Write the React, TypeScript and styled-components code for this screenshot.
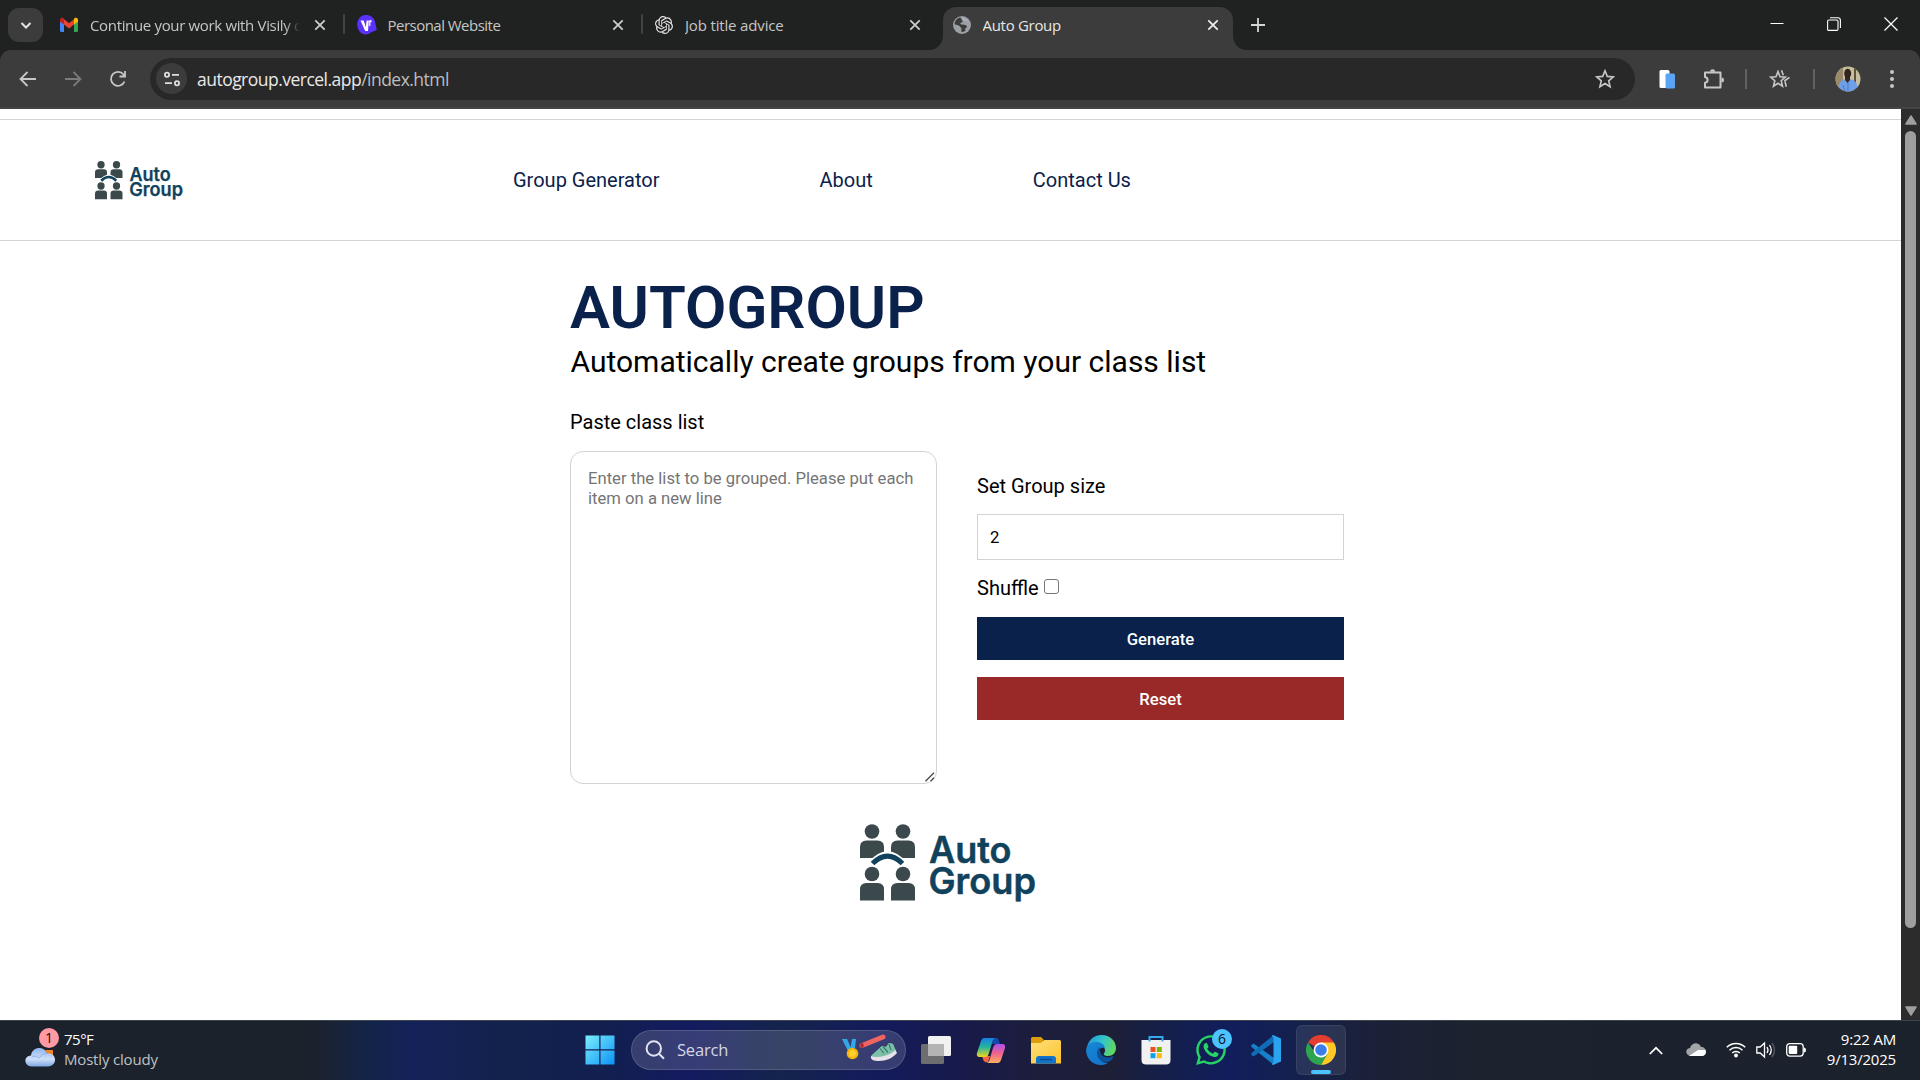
import React from "react";
import styled, { createGlobalStyle } from "styled-components";
import { SiOpenai } from "react-icons/si";
import { FaWhatsapp } from "react-icons/fa";

const GlobalStyle = createGlobalStyle`
  *, *::before, *::after { box-sizing: border-box; }
  body { margin: 0; background: #fff; overflow: hidden; }
`;

const systemFont = `"Open Sans", "Noto Sans", sans-serif`;

const Screen = styled.div`
  width: 1920px;
  height: 1080px;
  display: flex;
  flex-direction: column;
  overflow: hidden;
  font-family: ${systemFont};
  svg { display: block; flex: none; }
`;

/* ---------- browser tab strip ---------- */

const TabStrip = styled.div`
  height: 50px;
  flex: none;
  display: flex;
  background: #202221;
  padding-left: 8px;
`;

const TabSearch = styled.div`
  width: 35px;
  height: 34px;
  margin: 8px 7px 0 0;
  border-radius: 11px;
  background: #3b3c3b;
  display: grid;
  place-items: center;
`;

const TabSlot = styled.div`
  width: 297.5px;
  padding-top: 7px;
  display: flex;
`;

const Tab = styled.div<{ $active?: boolean }>`
  position: relative;
  width: 290px;
  height: 43px;
  display: flex;
  align-items: center;
  padding: 0 10px 7px 9px;
  border-radius: 13px 13px 0 0;
  background: ${(p) => (p.$active ? "#3c3c3c" : "transparent")};
  color: ${(p) => (p.$active ? "#e6e6e6" : "#c5c6c5")};
  ${(p) =>
    p.$active &&
    `
    &::before, &::after {
      content: "";
      position: absolute;
      bottom: 0;
      width: 14px;
      height: 14px;
    }
    &::before { left: -14px; background: radial-gradient(circle at 0 0, #202221 13.5px, #3c3c3c 14.5px); }
    &::after { right: -14px; background: radial-gradient(circle at 100% 0, #202221 13.5px, #3c3c3c 14.5px); }
  `}
`;

const TabTitle = styled.span<{ $spacing?: number; $fade?: boolean }>`
  width: 210px;
  margin-left: 11px;
  font-size: 15px;
  line-height: 22px;
  letter-spacing: ${(p) => p.$spacing ?? -0.3}px;
  white-space: nowrap;
  overflow: hidden;
  ${(p) => p.$fade && `mask-image: linear-gradient(90deg, #000 195px, transparent 210px);`}
`;

const TabDivider = styled.div`
  width: 2px;
  height: 20px;
  margin: 7px 0 0 3px;
  border-radius: 1px;
  background: #414241;
`;

const TabClose = styled.div`
  width: 20px;
  margin-left: auto;
  display: grid;
  place-items: center;
`;

const NewTab = styled.div`
  width: 36px;
  height: 50px;
  display: grid;
  place-items: center;
`;

const WindowControls = styled.div`
  display: flex;
  margin: 0 1px 0 auto;
`;

const WindowButton = styled.div`
  width: 57px;
  height: 48px;
  display: grid;
  place-items: center;
`;

/* ---------- browser toolbar ---------- */

const ToolbarBack = styled.div`
  flex: none;
  background: #202221;
`;

const Toolbar = styled.div`
  height: 59px;
  display: flex;
  align-items: center;
  background: #3c3c3c;
  border-radius: 11px 11px 0 0;
  border-bottom: 2px solid #454545;
  padding-left: 6px;
`;

const ToolButton = styled.div<{ $width: number }>`
  width: ${(p) => p.$width}px;
  height: 42px;
  flex: none;
  display: grid;
  place-items: center;
`;

const AddressBar = styled.div`
  width: 1485px;
  height: 42px;
  flex: none;
  margin-left: 9px;
  border-radius: 21px;
  background: #282828;
  display: flex;
  align-items: center;
  padding: 0 20px 0 6px;
`;

const SiteChip = styled.div`
  width: 31px;
  height: 31px;
  border-radius: 50%;
  background: #3c3c3c;
  display: grid;
  place-items: center;
`;

const Url = styled.span`
  flex: 1;
  margin-left: 10px;
  font-size: 17.5px;
  line-height: 24px;
  letter-spacing: -0.52px;
  color: #e8e8e8;
  span { color: #bdbdbd; }
`;

const ToolDivider = styled.div`
  width: 2px;
  height: 20px;
  background: #616161;
`;

/* ---------- web page ---------- */

const Viewport = styled.div`
  height: 911px;
  flex: none;
  display: flex;
`;

const Page = styled.div`
  width: 1901px;
  height: 911px;
  background: #fff;
  padding-top: 10px;
  font-family: Roboto, sans-serif;
  color: #000;
`;

const Nav = styled.nav`
  height: 122px;
  border-top: 1px solid #d3d3d3;
  border-bottom: 1px solid #d3d3d3;
  display: flex;
  align-items: center;
  padding-left: 94.5px;
`;

const NavLinks = styled.div`
  display: flex;
  gap: 160px;
  margin-left: 330.5px;
`;

const NavLink = styled.a`
  font-size: 20px;
  line-height: 24px;
  color: #0a214c;
  white-space: nowrap;
`;

const Content = styled.main`
  width: 774px;
  margin-left: 570px;
  padding-top: 32px;
`;

const Title = styled.h1`
  margin: 0;
  font-size: 60px;
  line-height: 70px;
  font-weight: 600;
  color: #0a214c;
`;

const Subtitle = styled.p`
  margin: 1px 0 0 0.5px;
  font-size: 30px;
  line-height: 35px;
  white-space: nowrap;
`;

const FormRow = styled.div`
  display: flex;
  gap: 40px;
  margin-top: 31px;
`;

const Column = styled.div<{ $offset?: number }>`
  width: 367px;
  display: flex;
  flex-direction: column;
  padding-top: ${(p) => p.$offset ?? 0}px;
`;

const Label = styled.label`
  font-size: 20px;
  line-height: 24px;
`;

const ListField = styled.div`
  position: relative;
  margin-top: 17px;
`;

const ListInput = styled.textarea`
  display: block;
  width: 367px;
  height: 333px;
  padding: 16.5px 16px 16.5px 17px;
  border: 1px solid #d3d3d3;
  border-radius: 13px;
  outline: none;
  font-family: Roboto, sans-serif;
  font-size: 16.667px;
  line-height: 20px;
  resize: none;
  &::placeholder { color: #757575; }
`;

const ResizeGrip = styled.svg`
  position: absolute;
  right: 2px;
  bottom: 2px;
`;

const SizeInput = styled.input`
  width: 367px;
  height: 46px;
  margin-top: 16px;
  padding: 0 12px;
  border: 1px solid #d3d3d3;
  outline: none;
  font-family: Roboto, sans-serif;
  font-size: 16.667px;
`;

const ShuffleRow = styled.label`
  display: flex;
  height: 24px;
  margin: 16px 0 17px;
  font-size: 20px;
  line-height: 24px;
`;

const ShuffleBox = styled.input`
  appearance: none;
  width: 15px;
  height: 15px;
  margin: 3px 0 0 5px;
  border: 1px solid #767676;
  border-radius: 3px;
  background: #fff;
`;

const ActionButton = styled.button<{ $color: string }>`
  height: 43px;
  margin-bottom: 17px;
  padding: 2px 0 0;
  border: 0;
  background: ${(p) => p.$color};
  color: #fff;
  font-family: Roboto, sans-serif;
  font-size: 16.667px;
  font-weight: 500;
  line-height: 20px;
`;

const FooterLogo = styled.div`
  margin: 39.5px 0 0 290px;
`;

const Scrollbar = styled.div`
  width: 19px;
  height: 911px;
  background: #2c2c2c;
  display: flex;
  flex-direction: column;
  align-items: center;
  padding-top: 6px;
`;

const Thumb = styled.div`
  width: 11px;
  height: 797px;
  margin: 6px 0 78px;
  border-radius: 6px;
  background: #9f9f9f;
`;

/* ---------- taskbar ---------- */

const Taskbar = styled.div`
  height: 60px;
  flex: none;
  display: flex;
  align-items: center;
  padding-bottom: 1px;
  border-top: 1px solid #3b454e;
  color: #fff;
  background: linear-gradient(
    90deg,
    #1c222c 0, #1c222c 315px, #13244a 370px, #14225a 415px, #13224c 500px,
    #121f50 610px, #141b60 690px, #14244c 780px, #141b5c 880px, #171a4a 960px,
    #1d1e3c 1040px, #1d1f36 1110px, #141f4c 1170px, #111e5c 1230px, #14214c 1300px,
    #1c2038 1370px, #1c222e 1480px, #1c222c 1920px
  );
`;

const Weather = styled.div`
  width: 560px;
  display: flex;
  align-items: center;
  padding-left: 25px;
`;

const WeatherText = styled.div`
  margin-left: 7px;
  padding-bottom: 3px;
  font-size: 15px;
  line-height: 20px;
  letter-spacing: -0.18px;
  color: #bfc1c4;
  strong { display: block; font-weight: 400; color: #fff; letter-spacing: -0.5px; }
`;

const TaskIcon = styled.div<{ $active?: boolean }>`
  position: relative;
  width: 50px;
  height: 50px;
  margin-right: 5px;
  display: grid;
  place-items: center;
  border-radius: 6px;
  background: ${(p) => (p.$active ? "rgba(255,255,255,.085)" : "transparent")};
  box-shadow: ${(p) => (p.$active ? "inset 0 0 0 1px rgba(255,255,255,.07)" : "none")};
`;

const StartButton = styled(TaskIcon)`
  margin: 0 -6px 0 15px;
`;

const RunningMark = styled.div`
  position: absolute;
  left: 15px;
  bottom: 1px;
  width: 20px;
  height: 4px;
  border-radius: 2px;
  background: #4cc2ff;
`;

const CountBadge = styled.div<{ $color: string; $x: number; $y: number }>`
  position: absolute;
  left: ${(p) => p.$x}px;
  top: ${(p) => p.$y}px;
  width: 20px;
  height: 20px;
  border-radius: 50%;
  background: ${(p) => p.$color};
  color: #111;
  font-size: 14px;
  line-height: 20px;
  text-align: center;
`;

const WeatherIcon = styled.div`
  width: 32px;
  height: 40px;
  padding-top: 17px;
  position: relative;
`;

const SearchBox = styled.div`
  width: 275px;
  height: 40px;
  margin: 0 5px 0 12px;
  border-radius: 20px;
  border: 1px solid rgba(255, 255, 255, 0.14);
  background: rgba(255, 255, 255, 0.15);
  display: flex;
  align-items: center;
  padding: 0 7px 0 13px;
`;

const SearchText = styled.span`
  flex: 1;
  margin-left: 12px;
  font-size: 16.5px;
  line-height: 24px;
  letter-spacing: -0.2px;
  color: #d5d7e4;
`;

const Tray = styled.div`
  margin-left: auto;
  display: flex;
  align-items: center;
  padding-right: 24px;
`;

const TrayItem = styled.div<{ $width: number }>`
  width: ${(p) => p.$width}px;
  display: grid;
  place-items: center;
`;

const Clock = styled.div`
  width: 80px;
  padding-bottom: 3px;
  text-align: right;
  font-size: 15px;
  line-height: 20px;
  letter-spacing: -0.2px;
  white-space: nowrap;
`;

/* ---------- drawings ---------- */

const Person = ({ x, y }: { x: number; y: number }) => (
  <g transform={`translate(${x} ${y})`} fill="#3b494c">
    <circle cx="12" cy="7.5" r="7.3" />
    <path d="M0 34V23q0-6.500 6.500-6.500h11q6.500 0 6.500 6.500v11z" />
  </g>
);

const AutoGroupLogo = ({ scale }: { scale: number }) => (
  <svg width={176 * scale} height={78 * scale} viewBox="0 0 176 78" overflow="visible">
    <Person x={0} y={0} />
    <Person x={31} y={0} />
    <path d="M11.500 42Q27.500 22 43.500 42" fill="none" stroke="#fff" strokeWidth="9.500" />
    <Person x={0} y={42.500} />
    <Person x={31} y={42.500} />
    <path d="M12.500 39.500Q27.500 24.500 42.500 39.500" fill="none" stroke="#10425c" strokeWidth="5" />
    <g fill="#10425c" stroke="#10425c" strokeWidth=".5" fontFamily="Inter, sans-serif" fontSize="37" fontWeight="600">
      <text x="69" y="39.300" textLength="82.500" lengthAdjust="spacingAndGlyphs">Auto</text>
      <text x="68.500" y="70" textLength="107.500" lengthAdjust="spacingAndGlyphs">Group</text>
    </g>
  </svg>
);

const Cross = ({ color = "#d0d0d0" }: { color?: string }) => (
  <svg width="12" height="12" viewBox="0 0 12 12" stroke={color} strokeWidth="1.800">
    <path d="M1.300 1.300l9.400 9.400M10.700 1.300l-9.400 9.400" />
  </svg>
);

const GmailIcon = () => (
  <svg width="20" height="20" viewBox="0 0 20 20">
    <path d="M1 5v10.500Q1 17 2.500 17H5V8.300z" fill="#4285f4" />
    <path d="M19 5v10.500q0 1.500-1.500 1.500H15V8.300z" fill="#34a853" />
    <path d="M5 4.300l5 4 5-4v5.300l-5 3.900-5-3.900z" fill="#ea4335" />
    <path d="M1 6V5c0-2 2.200-2.800 3.500-1.700L5 3.700v5.900L1 6.700z" fill="#c5221f" />
    <path d="M19 6V5c0-2-2.200-2.800-3.500-1.700l-.5.400v5.900l4-2.900z" fill="#fbbc04" />
  </svg>
);

const VisilyIcon = () => (
  <svg width="20" height="20" viewBox="0 0 20 20">
    <path d="M8.500 0c4.500-.5 8 2 9.300 6l2 8.600c-1.300 1.600-4 2-6 3C10 20.500 5.500 20 2.500 16.500-.5 12.300-.5 7 2.300 3 4 1 6 .2 8.500 0z" fill="#5b32fb" />
    <path d="M3.500 5.500h3.200l2.200 6.700L9.600 5.500h2.200L11 16H8.200z" fill="#fff" />
    <path d="M12.200 5.200h2.300v2h-1.100v3.600l-1.200.4z" fill="#fff" />
  </svg>
);

const GlobeIcon = () => (
  <svg width="20" height="20" viewBox="0 0 20 20">
    <circle cx="10" cy="10" r="9" fill="#9aa0a6" />
    <path d="M8.500 2.600C5 3.200 2.700 6 2.600 9.200l4.200 1.300c1.300.2 1.200 2.200 2.600 2.300v3.900c1.500.5 3.200-.1 4-1.300l-.2-2 1.900-1.500c-.5-1.600-1.800-2.300-3.400-2.100L9.200 9.600 8.100 8.300l2.700-1.600z" fill="#3c3c3c" />
    <path d="M11.200 2.500l1.100 2.300 3.200.3" fill="none" stroke="#b8bdc2" strokeWidth="1.200" />
  </svg>
);

const starPath = "M10 1.800l2.300 5.600 6 .5-4.600 3.900 1.400 5.900-5.100-3.200-5.100 3.200 1.400-5.900L1.700 7.900l6-.5z";

const Line = ({ d, size = 20, color = "#c7c7c7", w = 1.8 }: { d: string; size?: number; color?: string; w?: number }) => (
  <svg width={size} height={size} viewBox="0 0 20 20" fill="none" stroke={color} strokeWidth={w}>
    <path d={d} />
  </svg>
);

const SiteInfoIcon = () => (
  <svg width="18" height="18" viewBox="0 0 18 18" fill="none" stroke="#dedede" strokeWidth="1.800">
    <circle cx="4" cy="4.800" r="2.100" />
    <path d="M9 4.800h7M2 13.200h7" />
    <circle cx="14" cy="13.200" r="2.100" />
  </svg>
);

const Avatar = () => (
  <svg width="26" height="26" viewBox="0 0 26 26">
    <clipPath id="avatarClip"><circle cx="13" cy="13" r="12.500" /></clipPath>
    <g clipPath="url(#avatarClip)">
      <rect width="26" height="26" fill="#c7bd9e" />
      <path d="M0 0h8v26H0z" fill="#998a6b" />
      <path d="M19 0h2v26h-2z" fill="#5f5038" />
      <path d="M3 26c0-9 3-13 10-13s10 4 10 13z" fill="#6f9fe8" />
      <path d="M10 10h5v4l-2.500 3L10 14z" fill="#3a2720" />
      <ellipse cx="12.700" cy="7.500" rx="3.500" ry="4.700" fill="#32231e" />
      <path d="M13 17v9M8 19l2 7" stroke="#4770b4" strokeWidth=".8" />
    </g>
  </svg>
);

const CloudIcon = () => (
  <svg width="32" height="22" viewBox="0 0 32 22">
    <defs>
      <linearGradient id="cloud" x2="0" y2="1">
        <stop stopColor="#8eb5f2" /><stop offset=".6" stopColor="#cfdff8" /><stop offset="1" stopColor="#7fa6e4" />
      </linearGradient>
    </defs>
    <path d="M20 3h8v5h-5z" fill="#f5811f" />
    <path d="M6.500 19.500C-1.500 19-1.500 8.600 6 8.500 7-.500 19-1.500 22 6.300c10-1.300 11 12.900 1 13.200z" fill="url(#cloud)" />
    <path d="M7 9.500q4-1.500 7 1.500 3-5 8-4.500" fill="none" stroke="#7ea5e2" opacity=".7" />
  </svg>
);

const WindowsIcon = () => (
  <svg width="30" height="30" viewBox="0 0 30 30">
    <defs><linearGradient id="win" x2="1" y2="1"><stop stopColor="#7ceefc" /><stop offset="1" stopColor="#0c93f6" /></linearGradient></defs>
    <path d="M.500.500h13.800v13.800H.500zM15.500.500h14v13.800h-14zM.500 15.500h13.800v14H.500zM15.500 15.500h14v14h-14z" fill="url(#win)" />
  </svg>
);

const SearchArt = () => (
  <svg width="58" height="32" viewBox="0 0 58 32">
    <path d="M2 5h5l4 9-3 3zM12 5h4l-1 9-5 3z" fill="#31a9e8" />
    <circle cx="12.500" cy="19.500" r="5.800" fill="#f6b60b" />
    <circle cx="12.500" cy="19.500" r="3.500" fill="#ffcf2b" />
    <path d="M22 11.500L43 3" stroke="#ef6461" strokeWidth="5" strokeLinecap="round" />
    <ellipse cx="22" cy="11.500" rx="1.700" ry="2.400" fill="#9e2d36" />
    <path d="M31 22l11-10 4 1 3-4 4 1 3 8c-2 4-10 9-17 8z" fill="#7cc0aa" />
    <path d="M31 22c5 2 16 1 24-7l2 4c-4 5-11 8-18 8-5 0-9-1-8-5z" fill="#e7e1ea" />
    <path d="M31.500 21.500L42 12l4 1 3-4 4 1 2.500 6c-6 6-17 8-24 5.500z" fill="#7cc0aa" />
    <path d="M40 14.500l4 5M43 12.500l5 6M49 10l2 6" stroke="#38786b" strokeWidth="1.200" />
  </svg>
);

const TaskViewIcon = () => (
  <svg width="30" height="30" viewBox="0 0 30 30">
    <rect x="0" y="9" width="23" height="20" rx="1.500" fill="#6d6e70" />
    <rect x="7" y="1" width="23" height="20" rx="1.500" fill="#f1f1f1" />
    <path d="M7 9h16v12H8.500Q7 21 7 19.500z" fill="#b4b4b5" />
  </svg>
);

const CopilotIcon = () => (
  <svg width="30" height="30" viewBox="0 0 30 30">
    <defs>
      <linearGradient id="cpA" x2="0" y2="1"><stop stopColor="#167fe6" /><stop offset=".5" stopColor="#29b79a" /><stop offset="1" stopColor="#f4d51c" /></linearGradient>
      <linearGradient id="cpB" x2="0" y2="1"><stop stopColor="#a951ed" /><stop offset=".5" stopColor="#f0638d" /><stop offset="1" stopColor="#ffae5d" /></linearGradient>
    </defs>
    <path d="M17 3h3c2 0 2.500 1.500 3 3l1 3h-8z" fill="#1449b0" />
    <path d="M6 21h8l-2 6c-4 1-4.500-1-6-6z" fill="#f26545" />
    <path d="M8.500 3H19c-2 1-2.500 3-3 5l-3 10c-1 3-2 4-4 4H4c-3 0-3.500-2-3-4l4-12c.7-2 1.500-3 3.500-3z" fill="url(#cpA)" />
    <path d="M21.500 28H11c2-1 2.500-3 3-5l3-10c1-3 2-4 4-4h5c3 0 3.500 2 3 4l-4 12c-.7 2-1.500 3-3.500 3z" fill="url(#cpB)" />
  </svg>
);

const FolderIcon = () => (
  <svg width="30" height="30" viewBox="0 0 30 30">
    <defs><linearGradient id="fold" x2="1" y2="1"><stop stopColor="#ffe07a" /><stop offset="1" stopColor="#fcc22d" /></linearGradient></defs>
    <path d="M0 3.500Q0 2 1.500 2H10l3 3h-1v4H0z" fill="#dd9d0c" />
    <path d="M0 8h10l3-3h15.500Q30 5 30 6.500V28.500H0z" fill="url(#fold)" />
    <path d="M5 28.500V24q0-3 3-3h14q3 0 3 3v4.500z" fill="#1173ca" />
    <path d="M9 24.500h12" stroke="#0b4c8c" strokeWidth="1.500" />
  </svg>
);

const EdgeIcon = () => (
  <svg width="30" height="30" viewBox="0 0 30 30">
    <defs>
      <linearGradient id="edA" y1=".3" y2=".6"><stop stopColor="#2499dc" /><stop offset=".5" stopColor="#34c5c9" /><stop offset="1" stopColor="#64d957" /></linearGradient>
      <linearGradient id="edB" x2=".7" y2="1"><stop stopColor="#1687d6" /><stop offset="1" stopColor="#1474ca" /></linearGradient>
    </defs>
    <path d="M1 12C3 4 8.500 0 15.500 0 24 0 30 6 30 13c0 5-3.500 8-8 8-3 0-5-1-4-2.500 3-4-.500-8.500-6-8.500C7 10 3 11 1 16z" fill="url(#edA)" />
    <path d="M.200 14C1 9.500 5.500 7 10 7c5 0 8.500 2.500 8.800 6-4-1.500-8 2-7 7 1 5 6 8 10 8-2 1.400-4.500 2-7 2C6 30-.700 22.500.200 14z" fill="url(#edB)" />
    <path d="M14 12c-5 3-4 14 6 15 3 .300 5-1 7-4 1-1.500 0-2-1-1.500-7 3-13-1-12-9.500z" fill="#0c529c" />
  </svg>
);

const StoreIcon = () => (
  <svg width="30" height="30" viewBox="0 0 30 30">
    <path d="M.500 5h29v20q0 4.500-4.500 4.500H5Q.500 29.500.500 25z" fill="#f1f1f1" />
    <path d="M8.500 6.500V2h13v4.500" fill="none" stroke="#35aaea" strokeWidth="2" />
    <path d="M9.500 12h5v5h-5z" fill="#f04f23" /><path d="M15.800 12h5v5h-5z" fill="#7cb602" />
    <path d="M9.500 18.200h5v5h-5z" fill="#08a3ec" /><path d="M15.800 18.200h5v5h-5z" fill="#fdb90c" />
  </svg>
);

const CodeIcon = () => (
  <svg width="30" height="30" viewBox="0 0 30 30">
    <path d="M0 10.500L2.500 8.500 23 23v7L.500 12z" fill="#1680ca" />
    <path d="M0 19.500L2.500 21.500 23 7V0L.500 18z" fill="#0f6db7" />
    <path d="M22 0l8 3.500v23L22 30l-1.500-1 2-1.500v-25L20.500 1z" fill="#2ba4f0" />
  </svg>
);

const ChromeIcon = () => (
  <svg width="30" height="30" viewBox="0 0 30 30">
    <path d="M15 15L2 7.500A15 15 0 0 1 28 7.500z" fill="#e43e31" />
    <path d="M15 15h-8L2 7.500A15 15 0 0 0 15 30l6.500-11z" fill="#2da44f" />
    <path d="M15 15l6.500 3.700L15 30A15 15 0 0 0 28 7.500H15z" fill="#fcc927" />
    <circle cx="15" cy="15" r="7.400" fill="#fff" />
    <circle cx="15" cy="15" r="5.800" fill="#3b7eea" />
  </svg>
);

const OneDriveIcon = () => (
  <svg width="20" height="14" viewBox="0 0 20 14">
    <path d="M4 13C-1 12-1 5.500 4 5 6-1 13-1 15 4c3 0 5 2 5 5 0 2-2 4-4 4z" fill="#a2a4a7" />
    <path d="M3 13l9-6 7.500 0C21 11 18 13 16 13z" fill="#fff" />
  </svg>
);

const WifiIcon = () => (
  <svg width="20" height="16" viewBox="0 0 20 16" fill="none" stroke="#fff" strokeWidth="1.500">
    <path d="M.800 5.300a13 13 0 0 1 18.400 0M3.500 8.300a9.200 9.200 0 0 1 13 0M6.200 11a5.400 5.400 0 0 1 7.600 0" />
    <circle cx="10" cy="13.500" r="1.900" fill="#fff" stroke="none" />
  </svg>
);

const SpeakerIcon = () => (
  <svg width="20" height="18" viewBox="0 0 20 18" fill="none" stroke="#fff" strokeWidth="1.300">
    <path d="M.800 6h3.400L8.500 2v14l-4.300-4H.800z" />
    <path d="M11 6q2 3 0 6M13.500 4q3.500 5 0 10" />
    <path d="M16 2q5 7 0 14" stroke="#555a62" />
  </svg>
);

const BatteryIcon = () => (
  <svg width="20" height="14" viewBox="0 0 20 14">
    <rect x=".700" y=".700" width="16.500" height="12.400" rx="3" fill="none" stroke="#fff" strokeWidth="1.300" />
    <rect x="2.700" y="2.800" width="8.500" height="8.300" rx="1" fill="#fff" />
    <path d="M18 4.500q2 0 2 2.500t-2 2.500z" fill="#fff" />
  </svg>
);

const tabs = [
  { title: "Continue your work with Visily on", icon: <GmailIcon />, fade: true, spacing: -0.34 },
  { title: "Personal Website", icon: <VisilyIcon />, spacing: -0.52 },
  { title: "Job title advice", icon: <SiOpenai size={18} color="#e4e4e4" style={{ margin: 1 }} />, spacing: -0.16 },
  { title: "Auto Group", icon: <GlobeIcon />, active: true, spacing: -0.3 },
];

export default function App() {
  return (
    <Screen>
      <GlobalStyle />
      <TabStrip>
        <TabSearch>
          <svg width="12" height="12" viewBox="0 0 12 12" fill="none" stroke="#e3e3e3" strokeWidth="2">
            <path d="M1.500 4L6 8.500 10.500 4" />
          </svg>
        </TabSearch>
        {tabs.map((t, i) => (
          <TabSlot key={t.title}>
            <Tab $active={t.active}>
              {t.icon}
              <TabTitle $fade={t.fade} $spacing={t.spacing}>{t.title}</TabTitle>
              <TabClose><Cross color={t.active ? "#ececec" : "#cccccc"} /></TabClose>
            </Tab>
            {i < 2 && <TabDivider />}
          </TabSlot>
        ))}
        <NewTab>
          <svg width="14" height="14" viewBox="0 0 14 14" stroke="#d5d5d5" strokeWidth="1.800"><path d="M7 0v14M0 7h14" /></svg>
        </NewTab>
        <WindowControls>
          <WindowButton><svg width="14" height="14"><path d="M.500 6.500h13" stroke="#fff" /></svg></WindowButton>
          <WindowButton>
            <svg width="14" height="14" viewBox="0 0 14 14" fill="none" stroke="#fff" strokeWidth="1.100">
              <rect x=".600" y="3" width="10.400" height="10.400" rx="1.200" />
              <path d="M3 .700h7.800q2.600 0 2.600 2.600V11" />
            </svg>
          </WindowButton>
          <WindowButton><svg width="14" height="14" stroke="#fff" strokeWidth="1.200"><path d="M.500.500l13 13M13.500.500l-13 13" /></svg></WindowButton>
        </WindowControls>
      </TabStrip>

      <ToolbarBack>
        <Toolbar>
          <ToolButton $width={44}><Line size={20} d="M18 10H3M9.500 3L2.500 10l7 7" /></ToolButton>
          <ToolButton $width={45}><Line size={20} color="#7b7b7b" d="M2 10h15M10.500 3l7 7-7 7" /></ToolButton>
          <ToolButton $width={46}><Line size={20} d="M16.500 12.500A7 7 0 1 1 15.500 5.500M17 2v5.500h-5.500M15 5l2 2.500" /></ToolButton>
          <AddressBar>
            <SiteChip><SiteInfoIcon /></SiteChip>
            <Url>autogroup.vercel.app<span>/index.html</span></Url>
            <Line d={starPath} w={1.6} />
          </AddressBar>
          <ToolButton $width={64}>
            <svg width="16" height="20" viewBox="0 0 16 20">
              <rect x=".500" y="1" width="10" height="18" rx="1.500" fill="#fff" />
              <rect x="6.500" y="4.500" width="9.500" height="15" rx="1.500" fill="#5ba3f5" />
            </svg>
          </ToolButton>
          <ToolButton $width={30}>
            <svg width="22" height="22" viewBox="0 0 22 22" fill="none" stroke="#c7c7c7" strokeWidth="2">
              <path d="M2 4.500h15.500v15H2v-4.700c3.500-.8 3.500-5 0-5.800z" strokeLinejoin="round" />
              <path d="M7 3.800a2.600 2.600 0 0 1 5.200 0zM18.500 9.500a2.500 2.500 0 0 1 0 5z" fill="#c7c7c7" stroke="none" />
            </svg>
          </ToolButton>
          <ToolButton $width={33}><ToolDivider /></ToolButton>
          <ToolButton $width={36}>
            <svg width="22" height="20" viewBox="0 0 22 20" fill="none" stroke="#c7c7c7" strokeWidth="1.600">
              <path d="M9 2.500l2 5.300 5.300.4-4.100 3.500 1.300 5.500L9 14.300 4.500 17.200l1.300-5.500L1.700 8.200 7 7.800z" />
              <path d="M12.500 1.300l1.800 4.900M15.300 12l5.200-3.700M16 12.500l1.300 5.300" />
            </svg>
          </ToolButton>
          <ToolButton $width={32}><ToolDivider /></ToolButton>
          <ToolButton $width={35}><Avatar /></ToolButton>
          <ToolButton $width={54}>
            <svg width="4" height="18" fill="#c7c7c7"><circle cx="2" cy="2" r="2" /><circle cx="2" cy="9" r="2" /><circle cx="2" cy="16" r="2" /></svg>
          </ToolButton>
        </Toolbar>
      </ToolbarBack>

      <Viewport>
        <Page>
          <Nav>
            <AutoGroupLogo scale={0.5} />
            <NavLinks>
              <NavLink>Group Generator</NavLink>
              <NavLink>About</NavLink>
              <NavLink>Contact Us</NavLink>
            </NavLinks>
          </Nav>
          <Content>
            <Title>AUTOGROUP</Title>
            <Subtitle>Automatically create groups from your class list</Subtitle>
            <FormRow>
              <Column>
                <Label>Paste class list</Label>
                <ListField>
                  <ListInput placeholder="Enter the list to be grouped. Please put each item on a new line" />
                  <ResizeGrip width="10" height="10" viewBox="0 0 10 10" stroke="#4a4a4a" strokeWidth="1.300">
                    <path d="M.500 9.300L9 .800M5.500 9.300L9 5.800" />
                  </ResizeGrip>
                </ListField>
              </Column>
              <Column $offset={64}>
                <Label>Set Group size</Label>
                <SizeInput defaultValue="2" />
                <ShuffleRow>Shuffle<ShuffleBox type="checkbox" /></ShuffleRow>
                <ActionButton $color="#0a214c">Generate</ActionButton>
                <ActionButton $color="#992828">Reset</ActionButton>
              </Column>
            </FormRow>
            <FooterLogo><AutoGroupLogo scale={1} /></FooterLogo>
          </Content>
        </Page>
        <Scrollbar>
          <svg width="12" height="10" viewBox="0 0 12 10"><path d="M6 1L11 9H1z" fill="#9f9f9f" stroke="#9f9f9f" strokeWidth="1.500" strokeLinejoin="round" /></svg>
          <Thumb />
          <svg width="12" height="10" viewBox="0 0 12 10"><path d="M6 9L11 1H1z" fill="#9f9f9f" stroke="#9f9f9f" strokeWidth="1.500" strokeLinejoin="round" /></svg>
        </Scrollbar>
      </Viewport>

      <Taskbar>
        <Weather>
          <WeatherIcon>
            <CloudIcon />
            <CountBadge $color="#ff99a4" $x={14} $y={-2}>1</CountBadge>
          </WeatherIcon>
          <WeatherText><strong>75°F</strong>Mostly cloudy</WeatherText>
        </Weather>
        <StartButton><WindowsIcon /></StartButton>
        <SearchBox>
          <svg width="20" height="20" viewBox="0 0 20 20" fill="none" stroke="#e2e4ee" strokeWidth="2">
            <circle cx="8.800" cy="8.500" r="7.200" /><path d="M14 13.800l5 5" />
          </svg>
          <SearchText>Search</SearchText>
          <SearchArt />
        </SearchBox>
        <TaskIcon><TaskViewIcon /></TaskIcon>
        <TaskIcon><CopilotIcon /></TaskIcon>
        <TaskIcon><FolderIcon /></TaskIcon>
        <TaskIcon><EdgeIcon /></TaskIcon>
        <TaskIcon><StoreIcon /></TaskIcon>
        <TaskIcon>
          <FaWhatsapp size={34} color="#25d366" />
          <CountBadge $color="#4cc2ff" $x={26} $y={4}>6</CountBadge>
        </TaskIcon>
        <TaskIcon><CodeIcon /></TaskIcon>
        <TaskIcon $active><ChromeIcon /><RunningMark /></TaskIcon>
        <Tray>
          <TrayItem $width={40}>
            <svg width="14" height="9" viewBox="0 0 14 9" fill="none" stroke="#fff" strokeWidth="1.700"><path d="M.800 8L7 1.800 13.200 8" /></svg>
          </TrayItem>
          <TrayItem $width={40}><OneDriveIcon /></TrayItem>
          <TrayItem $width={40}><WifiIcon /></TrayItem>
          <TrayItem $width={20}><SpeakerIcon /></TrayItem>
          <TrayItem $width={40}><BatteryIcon /></TrayItem>
          <Clock>9:22 AM<br />9/13/2025</Clock>
        </Tray>
      </Taskbar>
    </Screen>
  );
}
